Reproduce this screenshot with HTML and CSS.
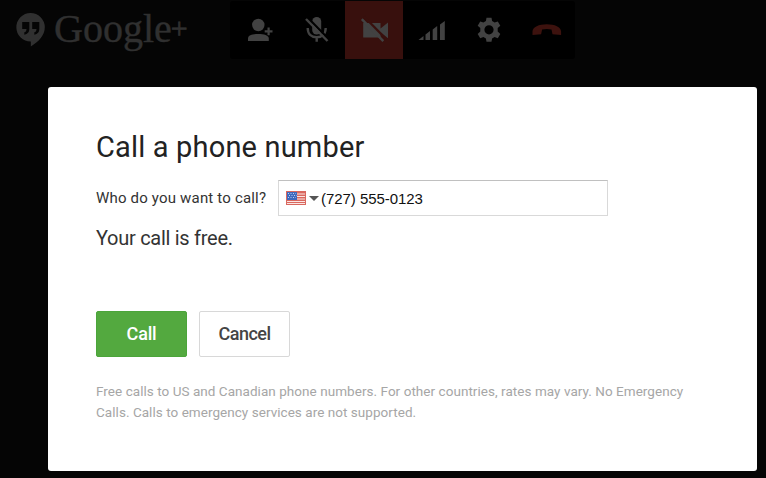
FILE: index.html
```html
<!DOCTYPE html>
<html lang="en">
  <head>
    <meta charset="UTF-8" />
    <meta name="viewport" content="width=device-width, initial-scale=1.0" />
    <title>Call a phone number</title>
    <link rel="stylesheet" href="styles.css">
  </head>
  <body>
    <header class="header">
      <div class="brand">
        <svg class="brand-icon" viewBox="0 0 29 34">
          <path fill-rule="evenodd" d="M14.5 0a14.3 14.3 0 0 1 14.3 14.3c0 8-6 14.500-14 19.200v-4.900A14.300 14.300 0 1 1 14.500 0zM6.200 9v7h4.300c0 2-.7 3-2.200 3.300v2.400c3.500-.5 5-2.500 5-5.700V9zM16.200 9v7h4.300c0 2-.7 3-2.200 3.300v2.400c3.500-.5 5-2.500 5-5.700V9z" />
        </svg>
        <span class="brand-name">Google</span><span class="brand-plus">+</span>
      </div>
      <nav class="toolbar">
        <button class="tool" aria-label="Invite people">
          <svg viewBox="0 0 57.5 58">
            <circle cx="28.300" cy="24" r="6.200" />
            <path d="M18 40v-2.500c0-3.300 5-4.500 10.400-4.500s10.400 1.200 10.400 4.500V40z" />
            <path d="M37.500 26.500h2.200v2.800h2.800v2.200h-2.800v2.800h-2.200v-2.800h-2.800v-2.200h2.800z" />
          </svg>
        </button>
        <button class="tool" aria-label="Mute microphone">
          <svg viewBox="0 0 57.5 58">
            <rect x="24.200" y="16" width="9" height="17.500" rx="4.500" />
            <path class="line" d="M19.700 27c0 6 3.600 9.300 9 9.300s9-3.300 9-9.300M28.700 36v4.700" />
            <path class="gap" d="M20 17l22 22.500" />
            <path class="slash" d="M18 18l21.500 22" />
          </svg>
        </button>
        <button class="tool tool-active" aria-label="Turn camera on">
          <svg viewBox="0 0 57.5 58">
            <path d="M18.200 22h17.300v5.500l7.500-6v15.800l-7.500-6V36.500H18.200z" />
            <path class="gap" d="M19 15.500l22.500 23" />
            <path class="slash" d="M16.800 18.200l21.500 22" />
          </svg>
        </button>
        <button class="tool" aria-label="Bandwidth">
          <svg viewBox="0 0 57.500 58">
            <path d="M15.500 39l5-4v4zM22.500 33.500l4.500-3.500v9h-4.500zM29.700 28.500l4.500-3.500v14h-4.500zM37 23.500L41.800 20v19H37z" />
          </svg>
        </button>
        <button class="tool" aria-label="Settings">
          <svg viewBox="0 0 57.5 58">
            <g transform="translate(29 28.800)">
              <path fill-rule="evenodd" d="M-2.500-12h5l.6 3.300 2.500 1.400 3.200-1.100 2.500 4.300-2.600 2.300v3.600l2.600 2.300-2.500 4.300-3.200-1.100-2.500 1.400-.6 3.300h-5l-.6-3.300-2.500-1.400-3.200 1.100-2.500-4.300 2.600-2.300v-3.600l-2.600-2.300 2.500-4.300 3.200 1.100 2.500-1.400zM0-4.600a4.600 4.600 0 1 0 0 9.200 4.600 4.600 0 0 0 0-9.200z" />
            </g>
          </svg>
        </button>
        <button class="tool tool-hangup" aria-label="Leave call">
          <svg viewBox="0 0 57.5 58">
            <path d="M14.500 34v-3.500c0-4.500 6.500-7.300 14.300-7.300s14.300 2.800 14.300 7.300V34l-8.600-.8-1-4.700c-3-.8-6.400-.8-9.400 0l-1 4.700z" />
          </svg>
        </button>
      </nav>
    </header>

    <main class="dialog">
      <h1 class="dialog-title">Call a phone number</h1>
      <form class="call-form">
        <div class="form-row">
          <label class="form-label" for="phone">Who do you want to call?</label>
          <div class="phone-field">
            <svg class="flag" viewBox="0 0 20 14">
              <rect width="20" height="14" fill="#d9685f" />
              <path d="M1 3h18M1 5.500h18M1 8h18M1 10.500h18M1 12.500h18" stroke="#fbe6e3" stroke-width="1.200" />
              <rect x="1" y="1" width="10" height="8" fill="#3d69bd" />
              <path d="M2 2.500h8M3 4.500h8M2 6.500h8" stroke="#b9cdf0" stroke-width="1" stroke-dasharray="1 1.500" />
            </svg>
            <span class="caret"></span>
            <input class="phone-input" type="tel" id="phone" name="phone" value="(727) 555-0123" />
          </div>
        </div>
        <p class="call-price">Your call is free.</p>
        <div class="actions">
          <button type="button" class="btn btn-call">Call</button>
          <button type="button" class="btn btn-cancel">Cancel</button>
        </div>
      </form>
      <p class="note">
        Free calls to US and Canadian phone numbers. For other countries, rates may vary. No Emergency<br />
        Calls. Calls to emergency services are not supported.
      </p>
    </main>
  </body>
</html>
```

FILE: styles.css
```css
* {
  box-sizing: border-box;
}

body {
  font-family: Roboto, Arial, sans-serif;
  background-color: #050505;
  margin: 0;
  height: 478px;
  overflow: hidden;
}

.header {
  display: flex;
  height: 87px;
  padding: 1px 0 0 16px;
}

.brand {
  display: flex;
  width: 214px;
  color: #303030;
  font-family: "Liberation Serif", serif;
}

.brand-icon {
  width: 29px;
  height: 34px;
  margin: 12px 9px 0 0;
  fill: #303030;
}

.brand-name {
  font-size: 40px;
  line-height: 46px;
  margin-top: 5px;
  -webkit-text-stroke: 0.4px #303030;
}

.brand-plus {
  font-size: 30px;
  line-height: 34px;
  margin-top: 10px;
  margin-left: -1px;
  -webkit-text-stroke: 0.7px #303030;
}

.toolbar {
  display: flex;
  width: 345px;
  height: 58px;
  background-color: #000;
  border-radius: 3px;
}

.tool {
  flex: 1;
  padding: 0;
  border: none;
  background: none;
  color: #000;
}

.tool svg {
  display: block;
  width: 100%;
  height: 58px;
  fill: #424242;
}

.tool .line,
.tool .slash,
.tool .gap {
  fill: none;
  stroke: #424242;
  stroke-width: 2.4;
}

.tool .gap {
  stroke: currentColor;
}

.tool-active {
  background-color: #38100d;
  color: #38100d;
}

.tool-hangup svg {
  fill: #3d120e;
}

.dialog {
  height: 384px;
  margin: 0 9px 0 48px;
  padding: 41px 48px 0;
  background-color: #fff;
  border-radius: 3px;
}

.dialog-title {
  margin: 0;
  color: #222;
  font-size: 29px;
  font-weight: 400;
  letter-spacing: 0.17px;
  line-height: 38px;
}

.form-row {
  display: flex;
  align-items: center;
  margin-top: 14px;
}

.form-label {
  width: 182px;
  color: #333;
  font-size: 15px;
  letter-spacing: 0.18px;
}

.phone-field {
  display: flex;
  align-items: center;
  width: 330px;
  height: 36px;
  padding-left: 7px;
  border: 1px solid #d9d9d9;
  border-top-color: #c0c0c0;
}

.flag {
  width: 20px;
  height: 14px;
}

.caret {
  margin: 0 2px 0 3px;
  border: 5px solid transparent;
  border-top-color: #555;
  border-bottom: none;
}

.phone-input {
  width: 270px;
  padding: 0;
  border: none;
  outline: none;
  color: #111;
  font-family: "Liberation Sans", Arial, sans-serif;
  font-size: 15px;
  letter-spacing: -0.05px;
}

.call-price {
  margin: 9px 0 0;
  color: #333;
  font-size: 20px;
  letter-spacing: -0.28px;
  line-height: 26px;
}

.actions {
  display: flex;
  gap: 12px;
  margin-top: 60px;
}

.btn {
  width: 91px;
  height: 46px;
  padding: 0 0 2px;
  border: 1px solid #d8d8d8;
  border-radius: 2px;
  background-color: #fff;
  color: #444;
  font-family: inherit;
  font-size: 18px;
  font-weight: 500;
  letter-spacing: -0.5px;
}

.btn-call {
  border-color: #4ba53a;
  background-color: #53a93f;
  color: #fff;
  letter-spacing: -0.2px;
}

.note {
  margin: 24px 0 0;
  color: #a6a6a6;
  font-size: 13.5px;
  letter-spacing: 0.045px;
  line-height: 21px;
  white-space: nowrap;
}
```
